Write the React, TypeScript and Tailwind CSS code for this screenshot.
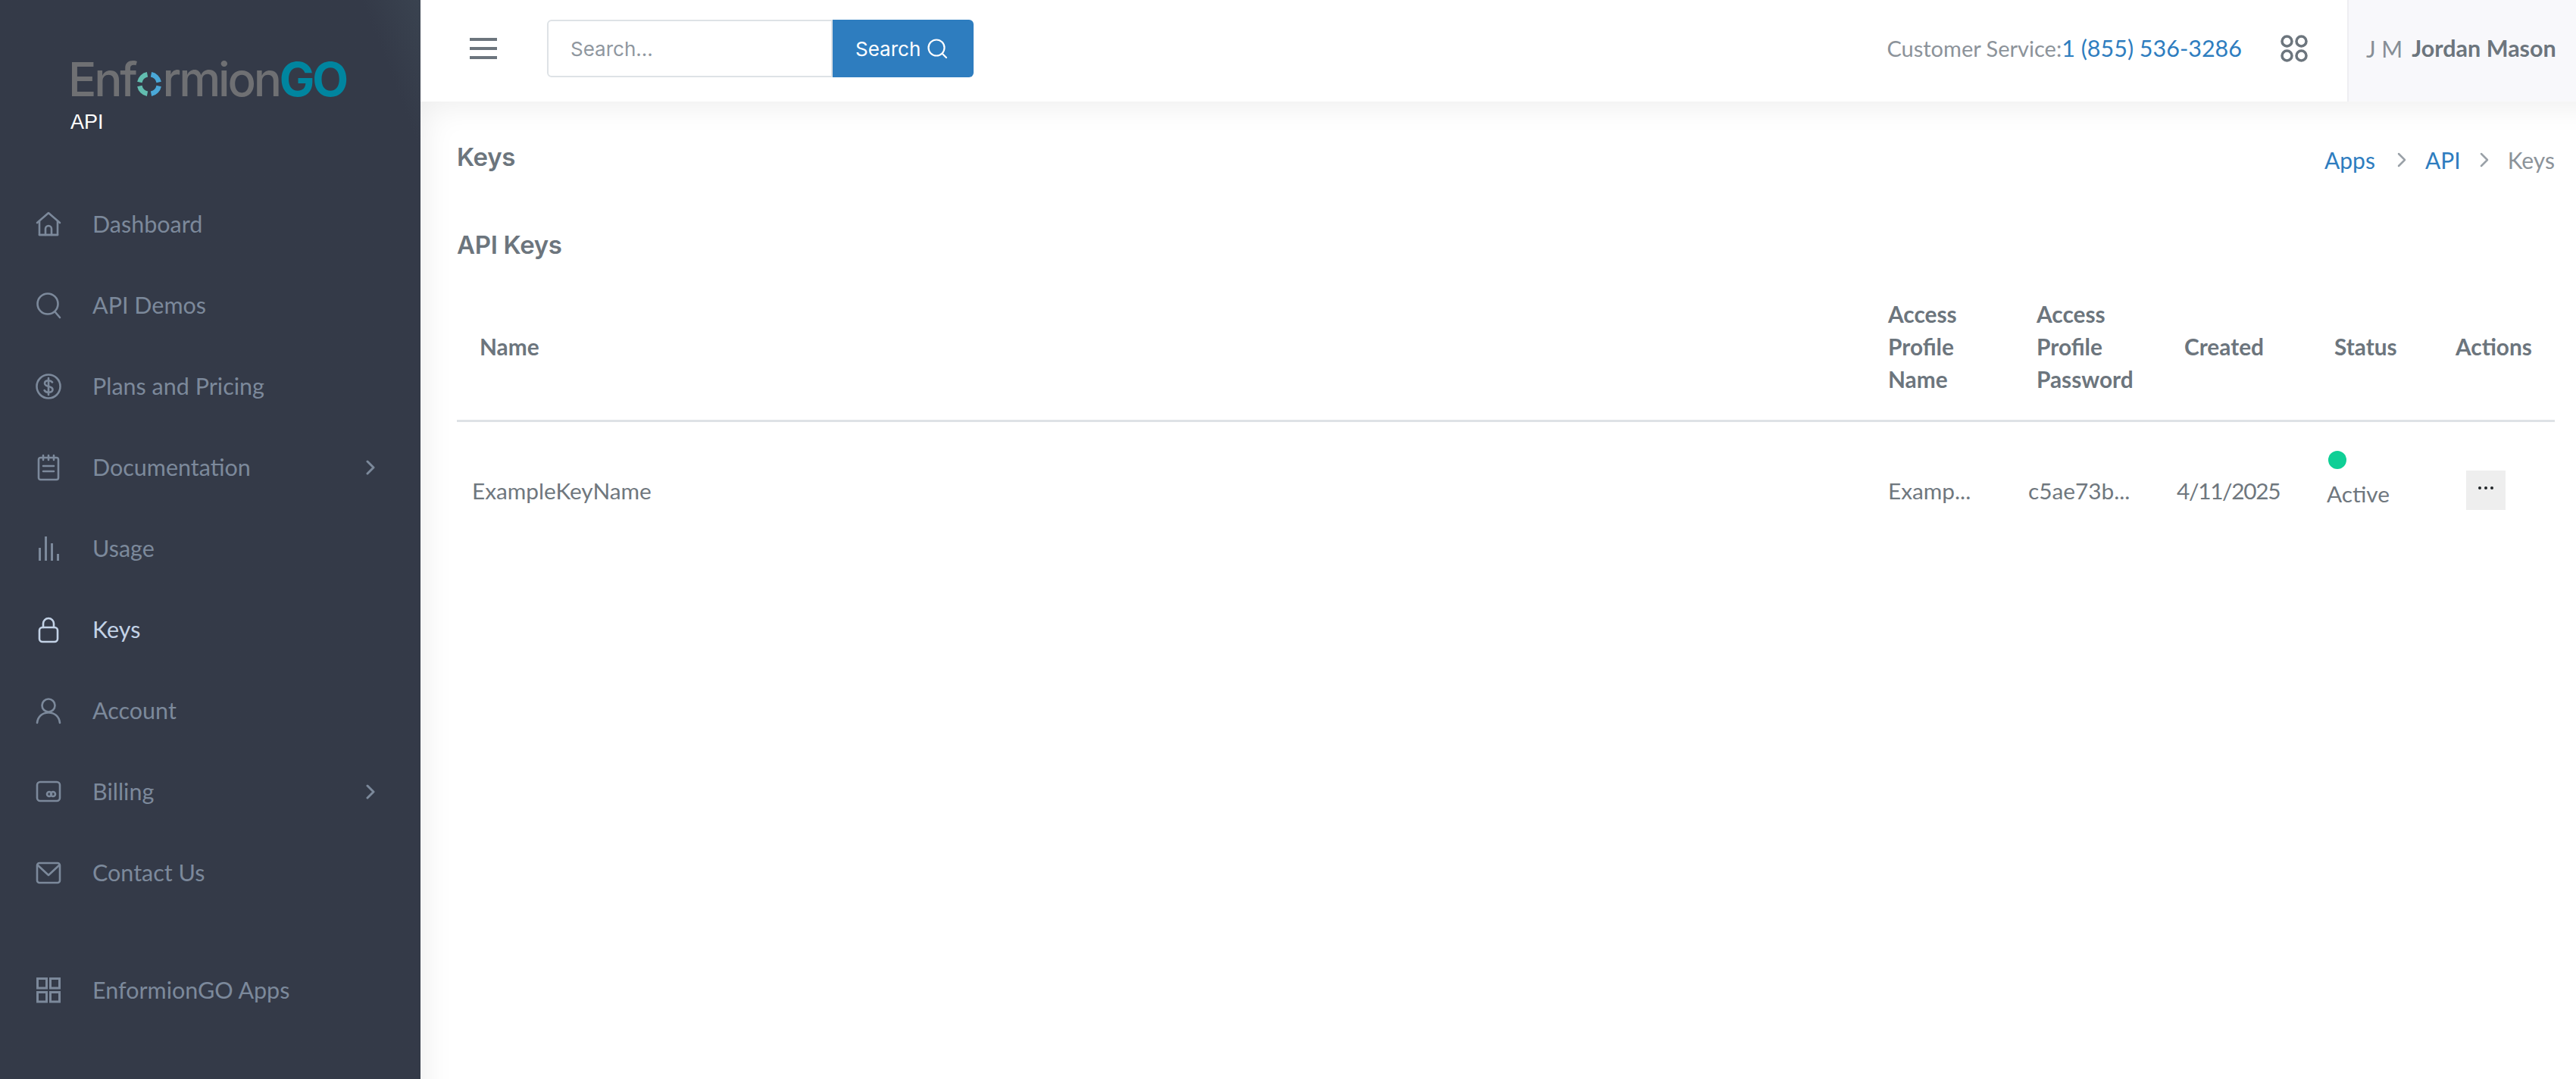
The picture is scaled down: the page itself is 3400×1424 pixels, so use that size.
import React from "react";

const iconClass = "w-[36px] h-[36px] shrink-0";

const Svg = ({ children }: { children: React.ReactNode }) => (
  <svg viewBox="0 0 36 36" fill="none" stroke="currentColor" strokeWidth="2.6" strokeLinecap="round" strokeLinejoin="round" className={iconClass}>
    {children}
  </svg>
);

const HomeIcon = () => (
  <Svg>
    <path d="M3 16 18 3l15 13" />
    <path d="M6 14v18h24V14" />
    <path d="M14 32v-8a4 4 0 0 1 8 0v8" />
    <path d="M6 32h24" />
  </Svg>
);
const SearchIcon = () => (
  <Svg>
    <circle cx="17" cy="16" r="13.5" />
    <path d="m27 27 6 7" />
  </Svg>
);
const DollarIcon = () => (
  <Svg>
    <circle cx="18" cy="18" r="15.5" />
    <path d="M23 12.5c-1-1.6-2.8-2.3-5-2.3-2.800 0-5 1.300-5 3.800 0 5.500 10.500 2.500 10.500 8 0 2.500-2.400 3.800-5.300 3.800-2.500 0-4.400-.9-5.500-2.600" />
    <path d="M18 7v22" />
  </Svg>
);
const NoteIcon = () => (
  <Svg>
    <rect x="5" y="5" width="26" height="29" rx="2.500" />
    <path d="M11 2v6M18 2v6M25 2v6M11 16h14M11 23h14" />
  </Svg>
);
const BarsIcon = () => (
  <svg viewBox="0 0 36 36" className={iconClass} fill="currentColor">
    <rect x="5" y="17" width="3" height="17" />
    <rect x="13" y="2" width="3" height="32" />
    <rect x="21" y="11" width="3" height="23" />
    <rect x="29" y="25" width="3" height="9" />
  </svg>
);
const LockIcon = () => (
  <Svg>
    <rect x="6" y="15" width="24" height="19" rx="4" />
    <path d="M11 15v-5a7 7 0 0 1 14 0v5" />
  </Svg>
);
const UserIcon = () => (
  <Svg>
    <circle cx="18" cy="11" r="8.500" />
    <path d="M3 34c1-8.500 7-13.500 15-13.500S32 25.500 33 34" />
  </Svg>
);
const WalletIcon = () => (
  <Svg>
    <rect x="3" y="5" width="30" height="25" rx="4" />
    <circle cx="19" cy="21" r="3" />
    <circle cx="24" cy="21" r="3" />
  </Svg>
);
const MailIcon = () => (
  <Svg>
    <rect x="3" y="5" width="30" height="26" rx="3" />
    <path d="m4 8 14 13L32 8" />
  </Svg>
);
const GridIcon = () => (
  <svg viewBox="0 0 36 36" fill="none" stroke="currentColor" strokeWidth="3" className={iconClass}>
    <rect x="3.500" y="2.500" width="12" height="12.500" />
    <rect x="20.500" y="2.500" width="12" height="12.500" />
    <rect x="3.500" y="20.500" width="12" height="12.500" />
    <rect x="20.500" y="20.500" width="12" height="12.500" />
  </svg>
);
const Chevron = () => (
  <svg viewBox="0 0 14 20" fill="none" stroke="currentColor" strokeWidth="3" strokeLinecap="round" strokeLinejoin="round" className="w-[14px] h-[20px]">
    <path d="m3 2 8 8-8 8" />
  </svg>
);

const navTop = [
  { label: "Dashboard", icon: <HomeIcon /> },
  { label: "API Demos", icon: <SearchIcon /> },
  { label: "Plans and Pricing", icon: <DollarIcon /> },
  { label: "Documentation", icon: <NoteIcon />, arrow: true },
  { label: "Usage", icon: <BarsIcon /> },
  { label: "Keys", icon: <LockIcon />, active: true },
  { label: "Account", icon: <UserIcon /> },
  { label: "Billing", icon: <WalletIcon />, arrow: true },
  { label: "Contact Us", icon: <MailIcon /> },
];

type NavItemProps = { label: string; icon: React.ReactNode; arrow?: boolean; active?: boolean };

const NavItem = ({ label, icon, arrow, active }: NavItemProps) => (
  <div className={`flex items-center h-[107px] pl-[46px] pr-[59px] text-[30.5px] ${active ? "text-[#c3d2e6]" : "text-[#7c899b]"}`}>
    {icon}
    <span className="ml-[40px] flex-1">{label}</span>
    {arrow && <Chevron />}
  </div>
);

const Logo = () => (
  <div className="flex items-center h-[46px] text-[62px] leading-none font-medium font-['Inter',sans-serif] text-[#6f7073] tracking-[-3.2px]">
    <span>Enf</span>
    <svg viewBox="0 0 32 32" fill="none" strokeWidth="6.500" className="w-[32px] h-[32px] mt-[12px] mx-[2px] shrink-0">
      <path d="M3.300 13.500A13 13 0 0 1 13.500 3.300" stroke="#62bdb0" />
      <path d="M18.500 3.300A13 13 0 0 1 28.700 13.500" stroke="#4aa8d8" />
      <path d="M28.700 18.500A13 13 0 0 1 18.500 28.700" stroke="#4aa8d8" />
      <path d="M13.500 28.700A13 13 0 0 1 3.300 18.500" stroke="#62bdb0" />
    </svg>
    <span>rmion</span>
    <span className="text-[#00859f] font-bold">GO</span>
  </div>
);

const Sidebar = () => (
  <aside className="w-[555px] shrink-0 h-full bg-gradient-to-bl from-[#3a4350] via-[#343a48] via-[7%] to-[#343a48] font-['Lato',sans-serif]">
    <div className="pl-[90px] pt-[82px] h-[242px]">
      <Logo />
      <div className="mt-[17px] ml-[3px] text-[27px] leading-[32px] text-white font-['Liberation_Sans',sans-serif]">API</div>
    </div>
    {navTop.map((item) => (
      <NavItem key={item.label} {...item} />
    ))}
    <div className="mt-[48px]">
      <NavItem label="EnformionGO Apps" icon={<GridIcon />} />
    </div>
  </aside>
);

const Header = () => (
  <header className="h-[134px] shrink-0 bg-white flex items-stretch text-[30px] relative z-10">
    <div className="flex items-center flex-1 pl-[65px] pb-[6px]">
      <div className="flex flex-col gap-[8px] w-[36px]">
        <div className="h-[4px] bg-[#6c757d]" />
        <div className="h-[4px] bg-[#6c757d]" />
        <div className="h-[4px] bg-[#6c757d]" />
      </div>
      <div className="ml-[66px] flex h-[76px]">
        <div className="w-[377px] border-2 border-[#dee2e6] rounded-l-[6px] pl-[29px] flex items-center text-[#8f979f] font-['Inter',sans-serif] text-[26px]">
          Search...
        </div>
        <div className="w-[186px] bg-[#2e7dbf] rounded-r-[6px] flex items-center pl-[30px] gap-[8px] text-white text-[26px] font-['Inter',sans-serif]">
          Search
          <svg viewBox="0 0 28 28" fill="none" stroke="currentColor" strokeWidth="2.200" strokeLinecap="round" className="w-[28px] h-[28px]">
            <circle cx="13" cy="13" r="10.500" />
            <path d="m21 21 5 5" />
          </svg>
        </div>
      </div>
      <div className="ml-auto flex items-center font-['Lato',sans-serif]">
        <span className="text-[#8c939a] text-[29px]">Customer Service:</span>
        <span className="text-[#2e7dbf] text-[30.5px]">1 (855) 536-3286</span>
      </div>
      <svg viewBox="0 0 36 36" fill="none" stroke="#6c757d" strokeWidth="3.500" className="w-[36px] h-[36px] ml-[51px] mr-[52px]">
        <circle cx="8.500" cy="8.500" r="6.500" />
        <circle cx="27.500" cy="8.500" r="6.500" />
        <circle cx="8.500" cy="27.500" r="6.500" />
        <circle cx="27.500" cy="27.500" r="6.500" />
      </svg>
    </div>
    <div className="w-[302px] bg-[#f8f8fb] border-l-2 border-[#eeeef2] flex items-center pl-[23px] pb-[6px] font-['Lato',sans-serif] whitespace-nowrap">
      <span className="text-[#868e96]">J M</span>
      <span className="ml-[12px] font-bold text-[#6c757d] text-[30.5px]">Jordan Mason</span>
    </div>
  </header>
);

const Crumb = () => (
  <svg viewBox="0 0 12 20" fill="none" stroke="#9aa1a8" strokeWidth="2.500" strokeLinecap="round" strokeLinejoin="round" className="w-[12px] h-[20px]">
    <path d="m2 2 8 8-8 8" />
  </svg>
);

const Th = ({ children }: { children: React.ReactNode }) => (
  <th className="pl-[30px] py-[32px] align-middle text-left font-bold text-[#6c757d]">{children}</th>
);

const KeysTable = () => (
  <table className="mt-[16px] w-full table-fixed border-collapse text-[29.8px] leading-[43px] font-['Lato',sans-serif]">
    <colgroup>
      <col className="w-[1859px]" />
      <col className="w-[196px]" />
      <col className="w-[195px]" />
      <col className="w-[198px]" />
      <col className="w-[160px]" />
      <col />
    </colgroup>
    <thead>
      <tr className="border-b-[3px] border-[#dee2e6]">
        <Th>Name</Th>
        <Th>Access Profile Name</Th>
        <Th>Access Profile Password</Th>
        <Th>Created</Th>
        <Th>Status</Th>
        <Th>Actions</Th>
      </tr>
    </thead>
    <tbody className="text-[#6f777e]">
      <tr className="h-[182px]">
        <td className="pl-[20px]">ExampleKeyName</td>
        <td className="pl-[30px]">Examp...</td>
        <td className="pl-[19px]">c5ae73b...</td>
        <td className="pl-[20px] tracking-[-1.3px]">4/11/2025</td>
        <td className="pl-[20px]">
          <div className="mb-[26px]">
            <div className="w-[24px] h-[24px] ml-[2px] rounded-full bg-[#0fcf96]" />
            <div className="mt-[11px]">Active</div>
          </div>
        </td>
        <td className="pl-[44px]">
          <div className="w-[52px] h-[52px] bg-[#eeeeee] flex items-center justify-center">
            <svg viewBox="0 0 24 6" className="w-[24px] h-[6px] mt-[-6px]" fill="#212529">
              <circle cx="4" cy="3" r="2" />
              <circle cx="12" cy="3" r="2" />
              <circle cx="20" cy="3" r="2" />
            </svg>
          </div>
        </td>
      </tr>
    </tbody>
  </table>
);

const Content = () => (
  <div className="flex-1 pl-[48px] pr-[28px] pt-[52px] bg-white shadow-[inset_28px_28px_40px_-22px_rgba(0,0,0,0.07)]">
    <div className="flex items-center justify-between h-[44px]">
      <h1 className="text-[33px] font-semibold text-[#6c757d] font-['Inter',sans-serif] tracking-[-0.3px]">Keys</h1>
      <div className="flex items-center text-[30px] font-['Lato',sans-serif] mt-[6px]">
        <span className="text-[#2e7dbf]">Apps</span>
        <span className="ml-[29px] mr-[25px] flex"><Crumb /></span>
        <span className="text-[#2e7dbf]">API</span>
        <span className="mx-[25px] flex"><Crumb /></span>
        <span className="text-[#8c939a]">Keys</span>
      </div>
    </div>
    <h2 className="mt-[71px] h-[44px] leading-[44px] text-[33px] font-semibold text-[#6c757d] font-['Inter',sans-serif] tracking-[-0.3px]">API Keys</h2>
    <KeysTable />
  </div>
);

export default function App() {
  return (
    <div className="flex h-[1424px] w-[3400px] overflow-hidden bg-white">
      <Sidebar />
      <main className="flex-1 flex flex-col min-w-0">
        <Header />
        <Content />
      </main>
    </div>
  );
}
